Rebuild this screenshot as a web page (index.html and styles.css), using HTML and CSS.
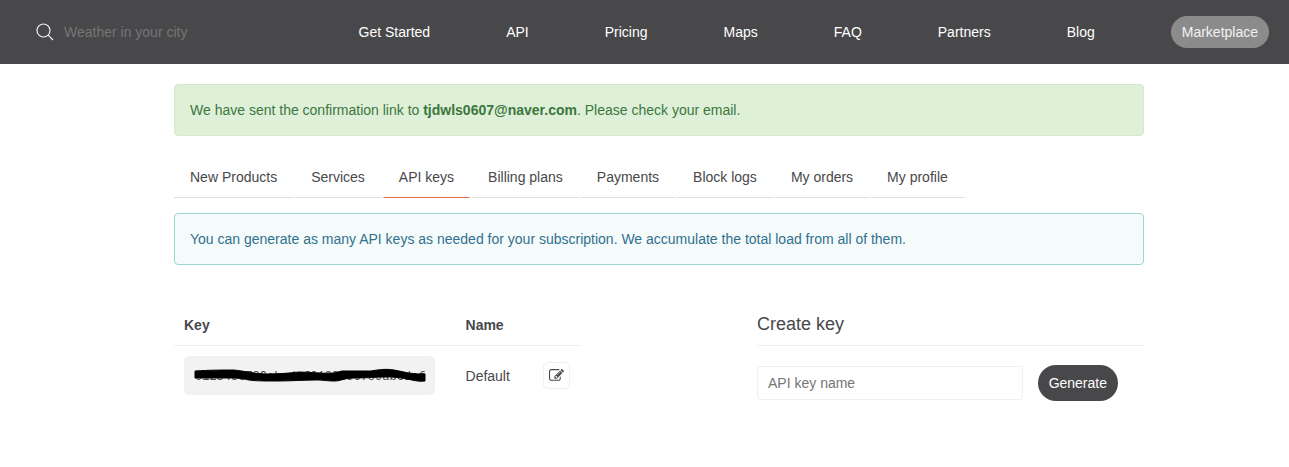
FILE: index.html
```html
<!DOCTYPE html>
<html lang="en">
<head>
<meta charset="utf-8">
<title>API keys</title>
<link rel="stylesheet" href="styles.css">
</head>
<body>
<header class="topbar">
  <form class="search">
    <svg class="search-icon" viewBox="0 0 18 18" aria-hidden="true"><circle cx="7.5" cy="7.5" r="6.5"/><path d="M12.2 12.2 17 17"/></svg>
    <input class="search-input" type="text" placeholder="Weather in your city" aria-label="Weather in your city">
  </form>
  <nav class="main-nav">
    <a href="#">Get Started</a>
    <a href="#">API</a>
    <a href="#">Pricing</a>
    <a href="#">Maps</a>
    <a href="#">FAQ</a>
    <a href="#">Partners</a>
    <a href="#">Blog</a>
    <a href="#" class="pill">Marketplace</a>
  </nav>
</header>
<main class="content">
  <div class="alert alert-success">We have sent the confirmation link to <strong>tjdwls0607@naver.com</strong>. Please check your email.</div>
  <nav class="tabs">
    <a href="#">New Products</a>
    <a href="#">Services</a>
    <a href="#" class="active">API keys</a>
    <a href="#">Billing plans</a>
    <a href="#">Payments</a>
    <a href="#">Block logs</a>
    <a href="#">My orders</a>
    <a href="#">My profile</a>
  </nav>
  <div class="alert alert-info">You can generate as many API keys as needed for your subscription. We accumulate the total load from all of them.</div>
  <div class="columns">
    <table class="keys">
      <thead>
        <tr><th class="col-key">Key</th><th class="col-name">Name</th><th class="col-edit"></th></tr>
      </thead>
      <tbody>
        <tr>
          <td>
            <div class="key-box">
              <code>0123456789abcdef0123456789abcdef</code>
              <svg class="scribble" viewBox="0 0 251 39" aria-hidden="true"><path d="M11 15 C25 14 40 14 50 14 C61 15 70 18 82 18 C95 18 106 17 115 16 C127 16 139 18 150 17 L158 15 L187 15 C198 13 204 13 210 14 L220 16 C229 18 234 18 241 18 L241 25 C234 26 229 24 223 23 C212 21 207 21 201 21 C192 21 184 22 170 22 C160 22 157 25 151 25 C142 25 139 24 132 24 C119 24 107 25 93 25 C79 25 72 25 65 24 C56 22 51 22 44 22 L11 22 Z"/></svg>
            </div>
          </td>
          <td>Default</td>
          <td>
            <button class="edit" type="button" aria-label="Edit key name">
              <svg viewBox="0 0 1792 1792" aria-hidden="true"><path d="M888 1184l116-116-152-152-116 116v56h96v96h56zm440-720q-16-16-33 1l-350 350q-17 17-1 33t33-1l350-350q17-17 1-33zm80 594v190q0 119-84.500 203.500t-203.500 84.500h-832q-119 0-203.500-84.500t-84.500-203.500v-832q0-119 84.500-203.500t203.500-84.500h832q63 0 117 25 15 7 18 23 3 17-9 29l-49 49q-14 14-32 8-23-6-45-6h-832q-66 0-113 47t-47 113v832q0 66 47 113t113 47h832q66 0 113-47t47-113v-126q0-13 9-22l64-64q15-15 35-7t20 29zm-96-738l288 288-672 672h-288v-288zm444 132l-92 92-288-288 92-92q28-28 68-28t68 28l152 152q28 28 28 68t-28 68z"/></svg>
            </button>
          </td>
        </tr>
      </tbody>
    </table>
    <section class="create">
      <h2>Create key</h2>
      <form class="create-form">
        <input type="text" placeholder="API key name" aria-label="API key name">
        <button type="button">Generate</button>
      </form>
    </section>
  </div>
</main>
</body>
</html>
```
FILE: styles.css
```css
* {
  box-sizing: border-box;
}

body {
  margin: 0;
  background: #fff;
  color: #48484a;
  font: 14px/20px "Liberation Sans", Arial, sans-serif;
}

a {
  color: inherit;
  text-decoration: none;
}

input,
button {
  font: inherit;
}

.topbar {
  display: flex;
  align-items: center;
  justify-content: space-between;
  height: 64px;
  padding: 0 20px 0 36px;
  background: #48484a;
  color: #fff;
}

.search {
  display: flex;
  align-items: center;
  gap: 10px;
}

.search-icon {
  width: 18px;
  height: 18px;
  fill: none;
  stroke: #f2f2f2;
  stroke-width: 1.2;
}

.search-input {
  width: 180px;
  padding: 0;
  border: 0;
  outline: 0;
  background: none;
  color: #fff;
}

.search-input::placeholder {
  color: #757575;
}

.main-nav {
  display: flex;
  align-items: center;
  gap: 76px;
}

.main-nav .pill {
  padding: 6px 11px;
  border-radius: 16px;
  background: #8b8b8b;
  color: #f2f2f2;
}

.content {
  max-width: 1001px;
  margin: 0 auto;
  padding: 20px 1px 60px 30px;
}

.alert {
  padding: 15px;
  border: 1px solid;
  border-radius: 4px;
}

.alert-success {
  border-color: #d6e9c6;
  background: #dff0d8;
  color: #3c763d;
}

.alert-info {
  border-color: #9bdad2;
  background: #f5fbfb;
  color: #31708f;
}

.tabs {
  display: flex;
  gap: 2px;
  width: fit-content;
  margin: 20px 0 15px;
  padding-right: 2px;
  box-shadow: inset 0 -1px #eee;
}

.tabs a {
  padding: 10px 15px;
  border: 1px solid transparent;
  border-bottom-color: #ddd;
}

.tabs .active {
  border-bottom-color: #eb6e4b;
}

.columns {
  display: grid;
  grid-template-columns: 408fr 387fr;
  gap: 175px;
  align-items: start;
  margin-top: 40px;
}

.keys {
  width: 100%;
  border-collapse: separate;
  border-spacing: 0;
  table-layout: fixed;
}

.keys th,
.keys td {
  padding: 10px;
  text-align: left;
}

.keys th {
  border-bottom: 1px solid #f0f0f0;
}

.col-key {
  width: 69%;
}

.col-name {
  width: 19%;
}

.col-edit {
  width: 12%;
}

.key-box {
  position: relative;
  width: 251px;
  padding: 11px 11px 8px;
  border-radius: 5px;
  background: #f2f2f2;
}

.key-box code {
  display: block;
  font: 12px/20px "Liberation Mono", monospace;
}

.scribble {
  position: absolute;
  inset: 0;
  width: 100%;
  height: 100%;
  stroke: #000;
  stroke-width: 1;
}

.keys .edit {
  display: flex;
  align-items: center;
  justify-content: center;
  width: 27px;
  height: 27px;
  padding: 0;
  border: 1px solid #f0f0f0;
  border-radius: 5px;
  background: #fff;
}

.edit svg {
  flex: none;
  width: 15px;
  height: 15px;
  fill: #48484a;
}

.create h2 {
  margin: 0 0 19px;
  padding: 9px 0 11px;
  border-bottom: 1px solid #f0f0f0;
  font-size: 18px;
  font-weight: 400;
  line-height: 20px;
}

.create-form {
  display: flex;
  align-items: center;
  gap: 15px;
  padding-right: 26px;
}

.create-form input {
  flex: 1;
  min-width: 0;
  height: 34px;
  padding: 0 10px;
  border: 1px solid #f0f0f0;
  border-radius: 3px;
  outline: 0;
}

.create-form input::placeholder {
  color: #757575;
}

.create-form button {
  height: 36px;
  padding: 0 11px;
  border: 0;
  border-radius: 18px;
  background: #48484a;
  color: #fff;
}
```
